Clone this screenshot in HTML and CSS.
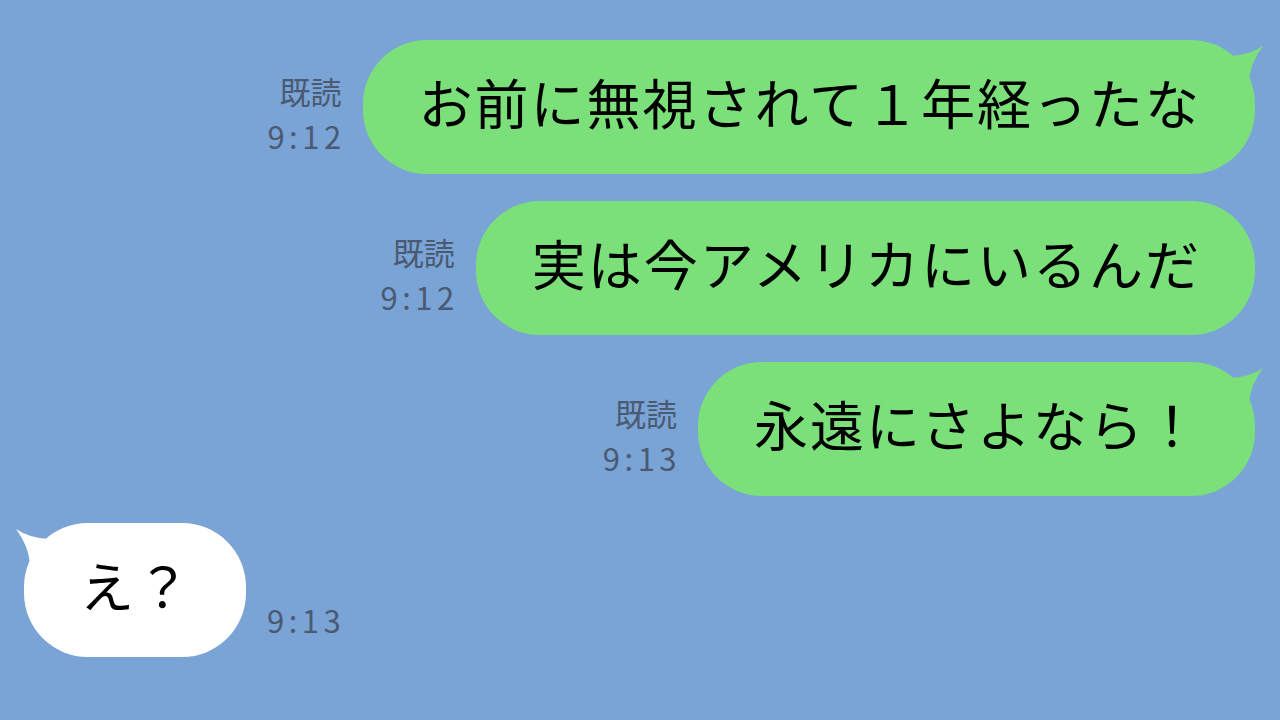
FILE: index.html
```html
<!DOCTYPE html>
<html lang="ja">

<head>
    <meta charset="UTF-8">
    <meta name="viewport" content="width=device-width, initial-scale=1.0">
    <title>トーク</title>
    <link rel="stylesheet" href="styles.css">
</head>

<body>
    <div class="chat">
        <!-- 送信メッセージ -->
        <div class="row sent">
            <div class="meta">
                <span>既読</span>
                <span class="time">9:12</span>
            </div>
            <div class="bubble green">
                お前に無視されて１年経ったな
                <svg class="tail" viewBox="0 0 55 50" width="55" height="50"><path d="M14 34 L20 16 Q40 15 53 6 Q41 22 39 40 Z"/></svg>
            </div>
        </div>
        <!-- 続きのメッセージはしっぽなし -->
        <div class="row sent">
            <div class="meta">
                <span>既読</span>
                <span class="time">9:12</span>
            </div>
            <div class="bubble green">
                実は今アメリカにいるんだ
            </div>
        </div>
        <div class="row sent">
            <div class="meta">
                <span>既読</span>
                <span class="time">9:13</span>
            </div>
            <div class="bubble green">
                永遠にさよなら！
                <svg class="tail" viewBox="0 0 55 50" width="55" height="50"><path d="M14 34 L20 16 Q40 15 53 6 Q41 22 39 40 Z"/></svg>
            </div>
        </div>
        <!-- 受信メッセージ -->
        <div class="row received">
            <div class="bubble white">
                え？
                <svg class="tail" viewBox="0 0 55 50" width="55" height="50"><path d="M14 34 L20 16 Q40 15 53 6 Q41 22 39 40 Z"/></svg>
            </div>
            <div class="meta">
                <span class="time">9:13</span>
            </div>
        </div>
    </div>
</body>

</html>
```

FILE: styles.css
```css
* {
    margin: 0;
    padding: 0;
}

body {
    width: 1280px;
    height: 720px;
    overflow: hidden;
    background-color: #7ba4d6;
    font-family: "Noto Sans CJK JP", "Noto Sans", sans-serif;
}

.chat {
    display: flex;
    flex-direction: column;
    gap: 27px;
    padding: 40px 25px 0 24px;
}

.row {
    display: flex;
    align-items: flex-end;
    gap: 21px;
}

.sent {
    justify-content: flex-end;
}

.received {
    justify-content: flex-start;
}

.meta {
    display: flex;
    flex-direction: column;
    align-items: flex-end;
    margin-bottom: 16px;
    color: #4a5a72;
    font-size: 31px;
    line-height: 45px;
}

.time {
    letter-spacing: 4.5px;
    margin-right: -4px;
}

.received .meta {
    margin-bottom: 15px;
}

.bubble {
    position: relative;
    display: flex;
    align-items: center;
    height: 134px;
    padding: 0 54px 12px 56px;
    box-sizing: border-box;
    border-radius: 64px;
    color: #000;
    font-size: 54px;
    letter-spacing: 2px;
    white-space: nowrap;
}

.green {
    background-color: #7be07a;
}

.white {
    background-color: #fff;
}

.tail {
    position: absolute;
    top: 0;
    right: -10px;
}

.green .tail {
    fill: #7be07a;
}

.white .tail {
    right: auto;
    left: -10px;
    fill: #fff;
    transform: scaleX(-1);
}
```
